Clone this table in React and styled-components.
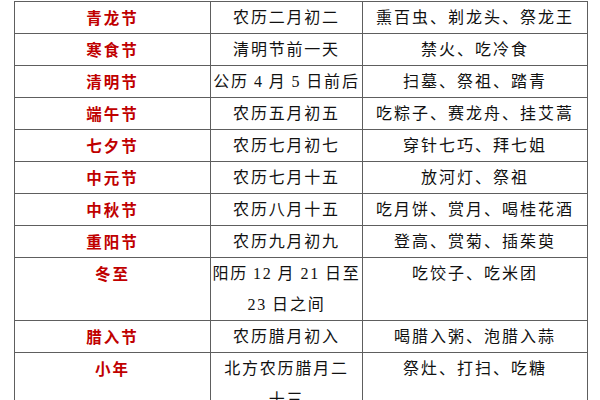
import React from "react";
import styled, { createGlobalStyle } from "styled-components";

const GlobalStyle = createGlobalStyle`
  body {
    margin: 0;
    background: #fff;
    overflow: hidden;
  }
`;

const Page = styled.div`
  padding: 1px 0 0 14px;
  width: 600px;
  height: 400px;
  box-sizing: border-box;
  overflow: hidden;
`;

const Table = styled.table`
  border-collapse: collapse;
  table-layout: fixed;
  width: 573px;
  font-family: "Liberation Serif", "Noto Sans CJK SC", serif;
  color: #111;
`;

const Col = styled.col`
  width: ${(p) => p.$w}px;
`;

const Cell = styled.td`
  border: 1px solid #5e5e5e;
  padding: 0;
  height: 31px;
  line-height: 31px;
  font-size: 16px;
  letter-spacing: ${(p) => p.$spacing || 1.5}px;
  text-align: center;
  vertical-align: top;
  white-space: nowrap;
`;

const NameCell = styled(Cell)`
  color: #c00000;
  font-weight: bold;
  font-size: 15.5px;
  letter-spacing: 2px;
  font-family: "Noto Sans CJK SC", sans-serif;
`;

// date lines use thin spaces around the digits, as Word's autospace does
const festivals = [
  ["青龙节", ["农历二月初二"], "熏百虫、剃龙头、祭龙王"],
  ["寒食节", ["清明节前一天"], "禁火、吃冷食"],
  ["清明节", ["公历\u20094\u2009月\u20095\u2009日前后"], "扫墓、祭祖、踏青"],
  ["端午节", ["农历五月初五"], "吃粽子、赛龙舟、挂艾蒿"],
  ["七夕节", ["农历七月初七"], "穿针七巧、拜七姐"],
  ["中元节", ["农历七月十五"], "放河灯、祭祖"],
  ["中秋节", ["农历八月十五"], "吃月饼、赏月、喝桂花酒"],
  ["重阳节", ["农历九月初九"], "登高、赏菊、插茱萸"],
  ["冬至", ["阳历\u200912\u2009月\u200921\u2009日至", "23\u2009日之间"], "吃饺子、吃米团"],
  ["腊入节", ["农历腊月初入"], "喝腊入粥、泡腊入蒜"],
  ["小年", ["北方农历腊月二", "十三"], "祭灶、打扫、吃糖"],
];

export default function App() {
  return (
    <>
      <GlobalStyle />
      <Page>
        <Table>
          <colgroup>
            <Col $w={196} />
            <Col $w={152} />
            <Col $w={225} />
          </colgroup>
          <tbody>
            {festivals.map(([name, date, custom]) => (
              <tr key={name}>
                <NameCell>{name}</NameCell>
                <Cell $spacing={1.8}>
                  {date.map((line, i) => (
                    <React.Fragment key={i}>
                      {i > 0 && <br />}
                      {line}
                    </React.Fragment>
                  ))}
                </Cell>
                <Cell $spacing={2}>{custom}</Cell>
              </tr>
            ))}
          </tbody>
        </Table>
      </Page>
    </>
  );
}
